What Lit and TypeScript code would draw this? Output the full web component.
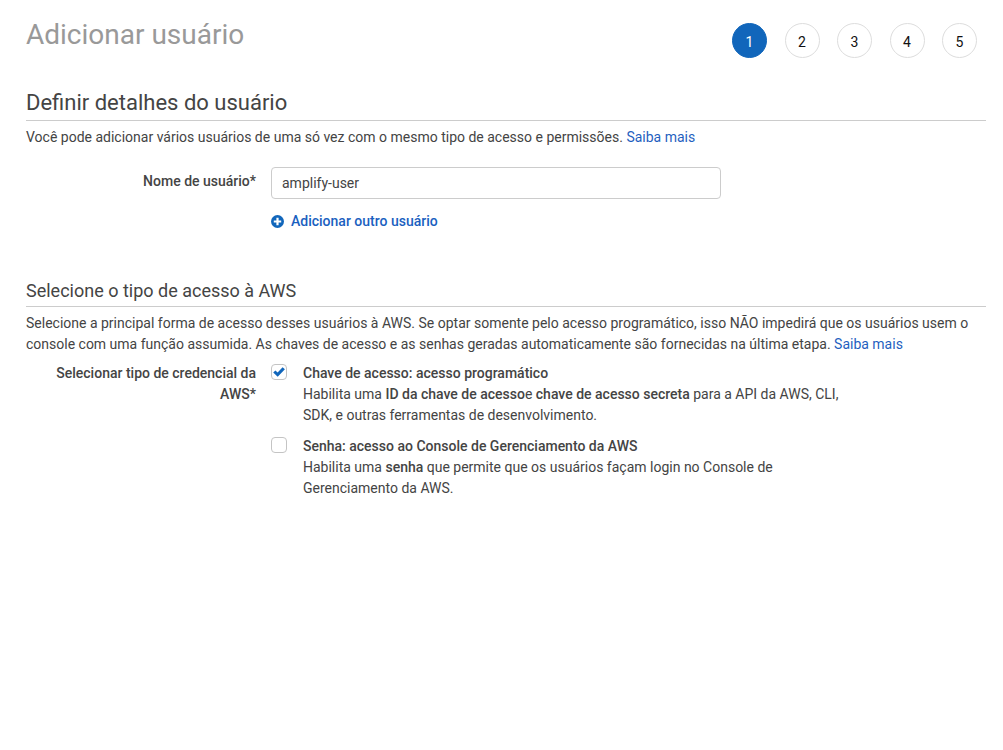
import { LitElement, html, css } from "lit";
import { customElement, state } from "lit/decorators.js";

@customElement("step-indicator")
class StepIndicator extends LitElement {
  static properties = { current: { type: Number }, total: { type: Number } };
  declare current: number;
  declare total: number;

  constructor() {
    super();
    this.current = 1;
    this.total = 5;
  }

  static styles = css`
    :host {
      display: block;
    }
    .steps {
      display: flex;
      justify-content: space-between;
      width: 245px;
      margin: 0;
      padding: 0;
      list-style: none;
    }
    .step {
      box-sizing: border-box;
      width: 35px;
      height: 35px;
      padding-top: 2px;
      border: 1px solid #ddd;
      border-radius: 50%;
      color: #111;
      font-size: 14px;
      line-height: 33px;
      text-align: center;
    }
    .current {
      border-color: #1166bb;
      background: #1166bb;
      color: #fff;
    }
  `;

  render() {
    const steps = Array.from({ length: this.total }, (_, i) => i + 1);
    return html`<ol class="steps">
      ${steps.map(
        (n) => html`<li class="step ${n === this.current ? "current" : ""}">${n}</li>`
      )}
    </ol>`;
  }
}

@customElement("app-root")
class AppRoot extends LitElement {
  @state() userName = "amplify-user";

  static styles = css`
    :host {
      display: block;
      padding: 18px 17px 24px 26px;
      background: #fff;
      color: #444;
      font: 14px/21px Roboto, "Liberation Sans", sans-serif;
    }
    .header {
      display: flex;
      justify-content: space-between;
      align-items: flex-start;
    }
    .title {
      margin: 0;
      color: #999;
      font-size: 28px;
      line-height: 34px;
      font-weight: 400;
    }
    .progress {
      margin: 5px 9px 0 0;
    }
    .section-title {
      margin: 31px 0 6px;
      padding-bottom: 3px;
      border-bottom: 1px solid #ccc;
      font-size: 22px;
      line-height: 28px;
      font-weight: 400;
    }
    .access-title {
      margin: 48px 0 6px;
      padding-bottom: 4px;
      border-bottom: 1px solid #ccc;
      font-size: 18px;
      line-height: 22px;
      font-weight: 400;
    }
    .text {
      margin: 0;
    }
    a {
      color: #1f5fc0;
      text-decoration: none;
    }
    .row {
      display: grid;
      grid-template-columns: 230px minmax(0, 1fr);
      column-gap: 15px;
    }
    .name-row {
      margin-top: 19px;
    }
    .access-row {
      margin-top: 8px;
    }
    .label {
      font-weight: 500;
      text-align: right;
    }
    .name-label {
      padding-top: 4px;
    }
    .name-input {
      box-sizing: border-box;
      display: block;
      width: 100%;
      max-width: 450px;
      height: 32px;
      padding: 0 10px;
      border: 1px solid #ccc;
      border-radius: 4px;
      background: #fff;
      color: #444;
      font: inherit;
    }
    .add {
      display: flex;
      align-items: center;
      gap: 7px;
      margin: 12px 0 0;
      padding: 0;
      border: 0;
      background: none;
      color: #1a5fbf;
      font: inherit;
      font-weight: 500;
      cursor: pointer;
    }
    .add svg {
      width: 13px;
      height: 13px;
    }
    .options {
      display: grid;
      gap: 10px;
      max-width: 570px;
    }
    .option {
      display: grid;
      grid-template-columns: 16px minmax(0, 1fr);
      column-gap: 16px;
    }
    .check {
      appearance: none;
      box-sizing: border-box;
      width: 16px;
      height: 16px;
      margin: 1px 0 0;
      border: 1px solid #c4c4c4;
      border-radius: 4px;
      background: #fff;
    }
    .box {
      display: grid;
      align-content: start;
    }
    .box > * {
      grid-area: 1 / 1;
    }
    .mark {
      display: none;
      width: 16px;
      height: 16px;
      margin-top: 1px;
      pointer-events: none;
    }
    .check:checked + .mark {
      display: block;
    }
    .name,
    b {
      font-weight: 500;
    }
  `;

  private option(id: string, checked: boolean, name: string, body: unknown) {
    return html`<div class="option">
      <div class="box">
        <input class="check" type="checkbox" id=${id} .checked=${checked} />
        <svg class="mark" viewBox="0 0 16 16" aria-hidden="true">
          <path d="M2.2 8.6 4.4 6.4 6.6 8.4 11.6 3.2 13.9 5.3 6.7 12.8Z" fill="#1166bb" />
        </svg>
      </div>
      <div>
        <label class="name" for=${id}>${name}</label>
        <p class="text">${body}</p>
      </div>
    </div>`;
  }

  render() {
    return html`
      <header class="header">
        <h1 class="title">Adicionar usuário</h1>
        <step-indicator class="progress" .current=${1} .total=${5}></step-indicator>
      </header>
      <main>
        <h2 class="section-title">Definir detalhes do usuário</h2>
        <p class="text">
          Você pode adicionar vários usuários de uma só vez com o mesmo tipo de acesso e
          permissões. <a href="#">Saiba mais</a>
        </p>
        <div class="row name-row">
          <label class="label name-label" for="user-name">Nome de usuário*</label>
          <div>
            <input class="name-input" id="user-name" type="text" .value=${this.userName} />
            <button class="add" type="button">
              <svg viewBox="0 0 13 13" aria-hidden="true">
                <circle cx="6.5" cy="6.5" r="6.5" fill="#1166bb" />
                <path d="M6.5 2.8V10.2M2.8 6.5H10.2" stroke="#fff" stroke-width="2.2" />
              </svg>
              Adicionar outro usuário
            </button>
          </div>
        </div>
        <h3 class="access-title">Selecione o tipo de acesso à AWS</h3>
        <p class="text">
          Selecione a principal forma de acesso desses usuários à AWS. Se optar somente pelo
          acesso programático, isso NÃO impedirá que os usuários usem o console com uma função
          assumida. As chaves de acesso e as senhas geradas automaticamente são fornecidas na
          última etapa. <a href="#">Saiba mais</a>
        </p>
        <div class="row access-row" role="group" aria-labelledby="access-label">
          <div class="label" id="access-label">Selecionar tipo de credencial da AWS*</div>
          <div class="options">
            ${this.option(
              "access-key",
              true,
              "Chave de acesso: acesso programático",
              html`Habilita uma <b>ID da chave de acesso</b>e <b>chave de acesso secreta</b> para
                a API da AWS, CLI, SDK, e outras ferramentas de desenvolvimento.`
            )}
            ${this.option(
              "password",
              false,
              "Senha: acesso ao Console de Gerenciamento da AWS",
              html`Habilita uma <b>senha</b> que permite que os usuários façam login no Console
                de Gerenciamento da AWS.`
            )}
          </div>
        </div>
      </main>
    `;
  }
}
